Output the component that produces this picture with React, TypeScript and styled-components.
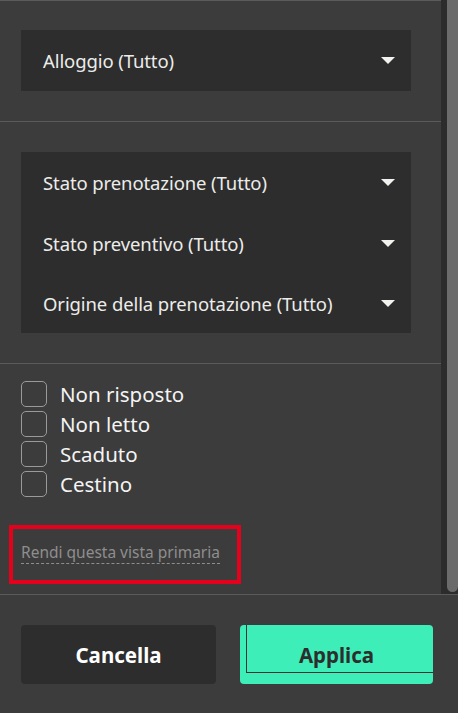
import styled, { createGlobalStyle } from 'styled-components';

const GlobalStyle = createGlobalStyle`
  html, body {
    margin: 0;
    padding: 0;
    background: #3c3c3c;
  }
  * {
    box-sizing: border-box;
  }
`;

const selects = [['Alloggio (Tutto)'], ['Stato prenotazione (Tutto)', 'Stato preventivo (Tutto)', 'Origine della prenotazione (Tutto)']];
const checks = ['Non risposto', 'Non letto', 'Scaduto', 'Cestino'];

const Caret = () => (
  <svg width="14" height="7" viewBox="0 0 14 7">
    <path d="M0 0 L14 0 L7 7 Z" fill="#f2f2ee" />
  </svg>
);

const App = () => {
  return (
    <StPanel>
      <GlobalStyle />
      <StScrollArea>
        <StContent>
          {selects.map((group, i) => (
            <StSection key={i}>
              <StSelectBox>
                {group.map((label) => (
                  <StSelectRow key={label}>
                    <span>{label}</span>
                    <Caret />
                  </StSelectRow>
                ))}
              </StSelectBox>
            </StSection>
          ))}
          <StCheckList>
            {checks.map((label) => (
              <StCheckRow key={label}>
                <StCheckbox />
                {label}
              </StCheckRow>
            ))}
          </StCheckList>
          <StHighlight>
            <StPrimaryLink>Rendi questa vista primaria</StPrimaryLink>
          </StHighlight>
        </StContent>
        <StScrollbar>
          <StThumb />
        </StScrollbar>
      </StScrollArea>
      <StFooter>
        <StButton>Cancella</StButton>
        <StButton primary>
          <StButtonEdge />
          Applica
        </StButton>
      </StFooter>
    </StPanel>
  );
};

const StPanel = styled.div`
  width: 458px;
  height: 713px;
  display: flex;
  flex-direction: column;
  background: #3c3c3c;
  font-family: 'Noto Sans', 'Liberation Sans', sans-serif;
  overflow: hidden;
`;

const StScrollArea = styled.div`
  height: 595px;
  display: flex;
  border-bottom: 1px solid #5a5a5a;
`;

const StContent = styled.div`
  width: 441px;
  border-top: 1px solid #5a5a5a;
`;

const StSection = styled.div`
  padding: 29px 30px 30px 21px;
  border-bottom: 1px solid #5a5a5a;
  & + & {
    padding-top: 30px;
  }
`;

const StSelectBox = styled.div`
  background: #2d2d2d;
  padding: 0 16px 0 22px;
`;

const StSelectRow = styled.div`
  height: 61px;
  display: flex;
  align-items: center;
  justify-content: space-between;
  color: #ececea;
  font-size: 18.5px;
  letter-spacing: -0.1px;
  & + & {
    height: 60px;
  }
`;

const StCheckList = styled.div`
  padding: 15px 21px 0;
  display: flex;
  flex-direction: column;
`;

const StCheckRow = styled.label`
  height: 30px;
  display: flex;
  align-items: center;
  gap: 13px;
  color: #f4f4f4;
  font-size: 20.5px;
`;

const StCheckbox = styled.span`
  width: 26px;
  height: 26px;
  border: 1px solid #9a9a9a;
  border-radius: 5px;
`;

const StHighlight = styled.div`
  display: inline-block;
  margin: 26px 0 0 9px;
  width: 232px;
  height: 59px;
  border: 4px solid #e5001c;
  padding: 12px 0 0 8px;
`;

const StPrimaryLink = styled.span`
  color: #8e8e8e;
  font-size: 15.5px;
  border-bottom: 1px dashed #8e8e8e;
  padding-bottom: 0;
`;

const StScrollbar = styled.div`
  width: 17px;
  background: #2c2c2c;
  display: flex;
  justify-content: flex-end;
`;

const StThumb = styled.div`
  width: 11px;
  height: 592px;
  background: #6b6b6b;
  border-radius: 0 0 6px 6px;
`;

const StFooter = styled.div`
  display: flex;
  gap: 24px;
  padding: 30px 25px 0 21px;
`;

const StButton = styled.button<{ primary?: boolean }>`
  position: relative;
  height: 59px;
  width: ${({ primary }) => (primary ? '193px' : '195px')};
  border: none;
  border-radius: 4px;
  background: ${({ primary }) => (primary ? '#3deeb9' : '#2d2d2d')};
  color: ${({ primary }) => (primary ? '#2d2d2d' : '#ffffff')};
  font-family: 'Noto Sans', 'Liberation Sans', sans-serif;
  font-weight: 700;
  font-size: 20.5px;
  padding: 0;
`;

const StButtonEdge = styled.span`
  position: absolute;
  left: 6px;
  top: 0;
  right: 0;
  height: 48px;
  border-left: 1px solid #333;
  border-bottom: 1px solid #333;
`;

export default App;
